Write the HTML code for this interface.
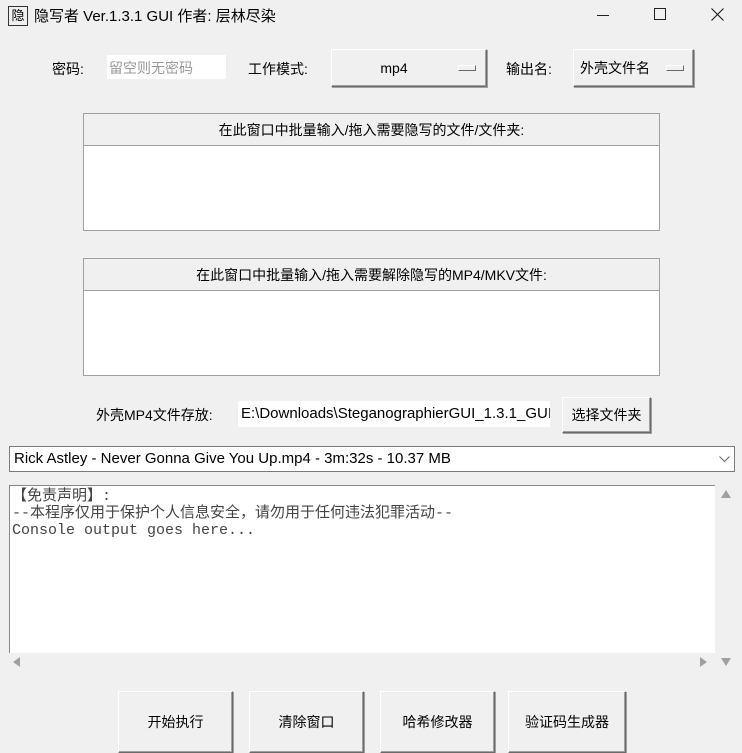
<!DOCTYPE html>
<html><head><meta charset="utf-8"><style>
*{box-sizing:border-box;margin:0;padding:0}
body{width:742px;height:751px;background:#f0f0f0;position:relative;overflow:hidden;font-family:"Liberation Sans","Noto Sans CJK SC",sans-serif;font-size:14px;color:#000}
.a{position:absolute}
.btn{position:absolute;background:#f0f0f0;border:1px solid;border-color:#fff #6a6a6a #6a6a6a #fff;box-shadow:1px 1px 0 #a0a0a0 ,inset -1px -1px 0 #a0a0a0;display:flex;align-items:center;justify-content:center;font-size:14px}
.box{position:absolute;border:1px solid #a0a0a0;background:#fff}
.hdr{position:absolute;left:0;right:0;top:0;height:32px;background:#f0f0f0;border-bottom:1px solid #a0a0a0;display:flex;align-items:center;justify-content:center;font-size:14px}
.ind{position:absolute;width:18px;height:6px;border:1px solid;border-color:#fff #6a6a6a #6a6a6a #fff;background:#f0f0f0}
.mono{font-family:"Liberation Mono","Noto Sans CJK SC",monospace;font-size:15px;line-height:17px;color:#444}
</style></head><body>
<div class="a" style="left:8px;top:6px;width:20px;height:20px;border:1.5px solid #333;font-size:13px;line-height:17px;text-align:center">隐</div>
<div class="a" style="left:34px;top:5px;font-size:15px">隐写者 Ver.1.3.1 GUI 作者: 层林尽染</div>
<div class="a" style="left:597px;top:15px;width:12px;height:1px;background:#222"></div>
<div class="a" style="left:654px;top:8px;width:12px;height:12px;border:1px solid #222"></div>
<svg class="a" style="left:711px;top:8px" width="13" height="13"><path d="M0.5 0.5L12.5 12.5M12.5 0.5L0.5 12.5" stroke="#222" stroke-width="1.2"/></svg>

<div class="a" style="left:52px;top:59px">密码:</div>
<div class="a" style="left:107px;top:55px;width:119px;height:24px;background:#fff;color:#999;padding:3px 2px">留空则无密码</div>
<div class="a" style="left:248px;top:59px">工作模式:</div>
<div class="btn" style="left:331px;top:49px;width:156px;height:38px;padding-right:30px">mp4</div>
<div class="ind" style="left:458px;top:65px"></div>
<div class="a" style="left:506px;top:59px">输出名:</div>
<div class="btn" style="left:573px;top:49px;width:121px;height:38px;justify-content:flex-start;padding-left:6px">外壳文件名</div>
<div class="ind" style="left:666px;top:65px"></div>

<div class="box" style="left:83px;top:113px;width:577px;height:118px"><div class="hdr">在此窗口中批量输入/拖入需要隐写的文件/文件夹:</div></div>
<div class="box" style="left:83px;top:258px;width:577px;height:118px"><div class="hdr">在此窗口中批量输入/拖入需要解除隐写的MP4/MKV文件:</div></div>

<div class="a" style="left:96px;top:405px">外壳MP4文件存放:</div>
<div class="a" style="left:238px;top:401px;width:312px;height:26px;background:#fff;padding:4px 3px;white-space:nowrap;overflow:hidden;font-size:15px">E:\Downloads\SteganographierGUI_1.3.1_GUI</div>
<div class="btn" style="left:562px;top:397px;width:89px;height:36px">选择文件夹</div>

<div class="a" style="left:9px;top:446px;width:726px;height:26px;background:#fff;border:1px solid #7a7a7a;padding:3px 4px;font-size:15px">Rick Astley - Never Gonna Give You Up.mp4 - 3m:32s - 10.37 MB</div>
<svg class="a" style="left:719px;top:456px" width="11" height="7"><path d="M0.5 0.5L5.5 5.5L10.5 0.5" stroke="#666" fill="none"/></svg>

<div class="a mono" style="left:9px;top:485px;width:706px;height:168px;background:#fff;border-left:1px solid #888;border-top:1px solid #888;padding:2px 2px">【免责声明】:<br>--本程序仅用于保护个人信息安全，请勿用于任何违法犯罪活动--<br>Console output goes here...</div>
<div class="a" style="left:721px;top:490px;width:0;height:0;border-left:5px solid transparent;border-right:5px solid transparent;border-bottom:8px solid #a0a0a0"></div>
<div class="a" style="left:721px;top:658px;width:0;height:0;border-left:5px solid transparent;border-right:5px solid transparent;border-top:8px solid #a0a0a0"></div>
<div class="a" style="left:13px;top:657px;width:0;height:0;border-top:5px solid transparent;border-bottom:5px solid transparent;border-right:7px solid #a0a0a0"></div>
<div class="a" style="left:700px;top:657px;width:0;height:0;border-top:5px solid transparent;border-bottom:5px solid transparent;border-left:7px solid #a0a0a0"></div>

<div class="btn" style="left:118px;top:691px;width:115px;height:62px">开始执行</div>
<div class="btn" style="left:249px;top:691px;width:115px;height:62px">清除窗口</div>
<div class="btn" style="left:380px;top:691px;width:115px;height:62px">哈希修改器</div>
<div class="btn" style="left:508px;top:691px;width:118px;height:62px">验证码生成器</div>
</body></html>
